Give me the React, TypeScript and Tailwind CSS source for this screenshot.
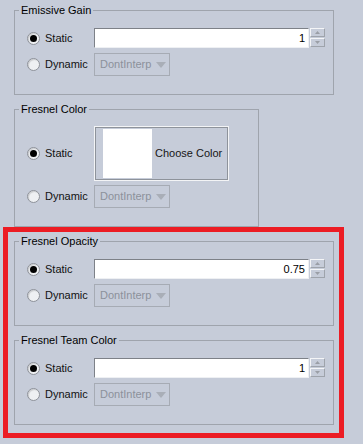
import React from 'react';

const BG = 'bg-[#c6ccd9]';

const Radio = ({ checked }: { checked?: boolean }) => (
  <span className="w-[13px] h-[13px] rounded-full border border-[#8d9199] bg-[#eef0f3] flex items-center justify-center shrink-0 shadow-[inset_1px_1px_1px_rgba(0,0,0,0.15)]">
    {checked && <span className="w-[7px] h-[7px] rounded-full bg-black" />}
  </span>
);

const RadioLabel = ({ checked, label }: { checked?: boolean; label: string }) => (
  <div className="w-[67px] flex items-center gap-[5px] shrink-0">
    <Radio checked={checked} />
    <span className="text-[#111]">{label}</span>
  </div>
);

const Spinner = () => (
  <div className="flex flex-col gap-px ml-px">
    {[0, 1].map((i) => (
      <div
        key={i}
        className="w-[15px] h-[9px] border border-[#f4f5f7] border-r-[#9ea3ab] border-b-[#9ea3ab] flex items-center justify-center"
      >
        <svg width="5" height="3" viewBox="0 0 5 3">
          {i === 0 ? <path d="M0 3 L2.5 0 L5 3 Z" fill="#9a9ea6" /> : <path d="M0 0 L2.5 3 L5 0 Z" fill="#9a9ea6" />}
        </svg>
      </div>
    ))}
  </div>
);

const NumberField = ({ value }: { value: string }) => (
  <div className="flex">
    <div className="w-[215px] h-[20px] bg-white border border-[#7d8188] border-b-[#eef0f3] border-r-[#eef0f3] flex items-center justify-end pr-[3px] text-black">
      {value}
    </div>
    <Spinner />
  </div>
);

const Dropdown = () => (
  <div className="w-[76px] h-[23px] border border-[#a6abb4] flex items-center justify-between pl-[5px] pr-[3px] text-[#8c919b]">
    <span>DontInterp</span>
    <svg width="10" height="6" viewBox="0 0 10 6">
      <path d="M0 0 L10 0 L5 6 Z" fill="#a9aeb7" />
    </svg>
  </div>
);

const Group = ({ title, width, children }: { title: string; width: string; children: React.ReactNode }) => (
  <div className={`relative ${width} border border-[#9fa4ad]`}>
    <span className={`absolute left-[4px] -top-[7px] px-[2px] leading-[13px] ${BG} text-black`}>{title}</span>
    {children}
  </div>
);

const SpinRow = ({ title, value }: { title: string; value: string }) => (
  <Group title={title} width="w-[320px]">
    <div className="pt-[17px] pb-[18px] pl-[12px] flex flex-col gap-[5px]">
      <div className="flex items-center">
        <RadioLabel checked label="Static" />
        <NumberField value={value} />
      </div>
      <div className="flex items-center">
        <RadioLabel label="Dynamic" />
        <Dropdown />
      </div>
    </div>
  </Group>
);

export default function App() {
  return (
    <div
      className={`w-[363px] h-[444px] ${BG} text-[11px] leading-[13px] pt-[10px]`}
      style={{ fontFamily: '"Liberation Sans", Arial, sans-serif' }}
    >
      <div className="ml-[14px] flex flex-col gap-[14px]">
        <SpinRow title="Emissive Gain" value="1" />
        <Group title="Fresnel Color" width="w-[245px]">
          <div className="pt-[16px] pb-[18px] pl-[12px] flex flex-col gap-[4px]">
            <div className="flex items-center">
              <RadioLabel checked label="Static" />
              <div className="w-[135px] h-[55px] border border-[#f3f4f6] shadow-[inset_0_0_0_1px_#8e939b] flex items-center pl-[8px] gap-[3px]">
                <div className="w-[49px] h-[49px] bg-white" />
                <span className="text-[#161616]">Choose Color</span>
              </div>
            </div>
            <div className="flex items-center">
              <RadioLabel label="Dynamic" />
              <Dropdown />
            </div>
          </div>
        </Group>
      </div>
      <div className="ml-[3px] w-[341px] h-[211px] border-[5px] border-[#ec1c24] pl-[6px] pt-[9px] flex flex-col gap-[14px]">
        <SpinRow title="Fresnel Opacity" value="0.75" />
        <SpinRow title="Fresnel Team Color" value="1" />
      </div>
    </div>
  );
}
